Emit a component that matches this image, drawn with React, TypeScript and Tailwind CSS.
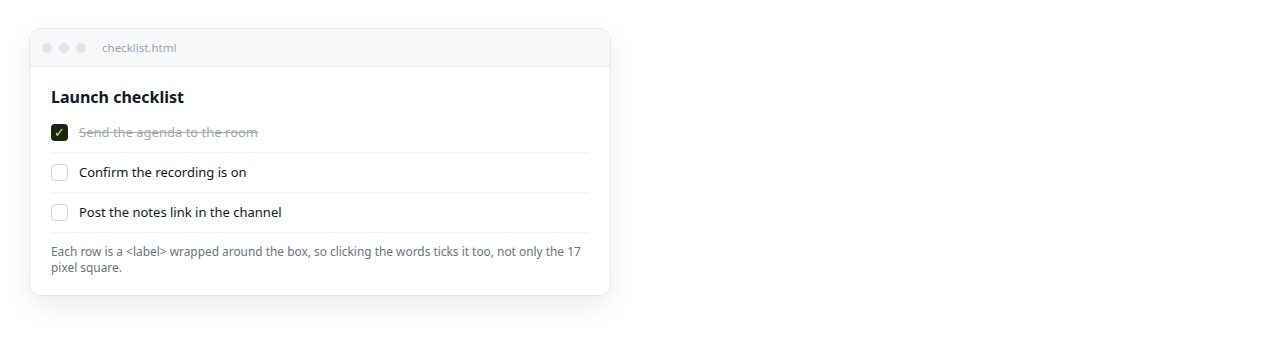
const items = [
  { text: "Send the agenda to the room", done: true },
  { text: "Confirm the recording is on", done: false },
  { text: "Post the notes link in the channel", done: false },
]

export default function App() {
  return (
    <div className="min-h-[360px] bg-white pl-[29px] pt-[28px] font-['Noto_Sans','Open_Sans',sans-serif]">
      <div className="w-[582px] overflow-hidden rounded-xl border border-[#e5e7eb] bg-white shadow-[0_10px_30px_rgba(0,0,0,0.08)]">
        <div className="flex h-[38px] items-center gap-[7px] border-b border-[#e5e7eb] bg-[#f7f8fa] px-[12px]">
          <span className="h-[10px] w-[10px] rounded-full bg-[#e2e4e8]" />
          <span className="h-[10px] w-[10px] rounded-full bg-[#e2e4e8]" />
          <span className="h-[10px] w-[10px] rounded-full bg-[#e2e4e8]" />
          <span className="ml-[9px] text-[11.5px] text-[#9ca3af]">checklist.html</span>
        </div>
        <div className="px-[21px] pb-[20px] pt-[19px]">
          <h1 className="text-[16px] font-bold leading-[22px] text-[#111827]">Launch checklist</h1>
          <div className="mt-[5px]">
            {items.map((item) => (
              <label
                key={item.text}
                className="flex h-[40px] items-center gap-[11px] border-b border-[#f0f1f3] text-[13px]"
              >
                {item.done ? (
                  <span className="flex h-[17px] w-[17px] items-center justify-center rounded-[4px] bg-[#1c2310] text-[13px] leading-none text-[#d4f05a]">
                    ✓
                  </span>
                ) : (
                  <span className="h-[17px] w-[17px] rounded-[4px] border border-[#d1d5db] bg-white" />
                )}
                <span
                  className={
                    item.done ? "text-[#a3a7ae] line-through" : "text-[#111827]"
                  }
                >
                  {item.text}
                </span>
              </label>
            ))}
          </div>
          <p className="mt-[10px] text-[11.9px] leading-[16px] text-[#6b7280]">
            Each row is a &lt;label&gt; wrapped around the box, so clicking the words ticks it too, not only the 17 pixel square.
          </p>
        </div>
      </div>
    </div>
  )
}
